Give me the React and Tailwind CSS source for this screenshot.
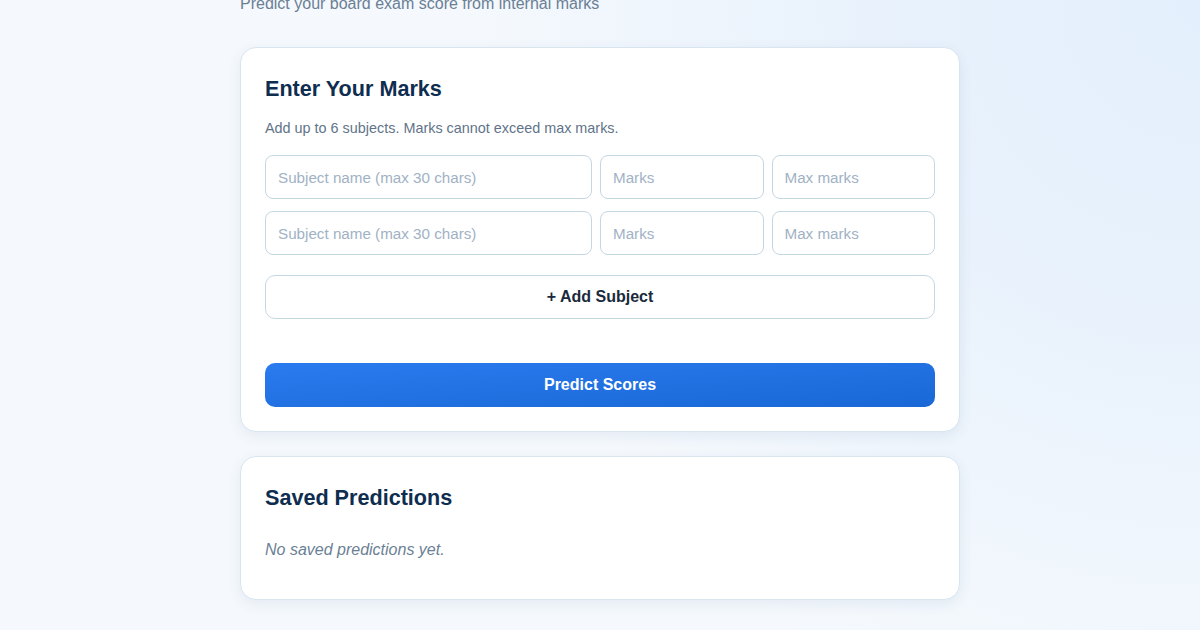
export default function App() {
  const rows = [0, 1];
  const inputCls =
    "h-11 w-full min-w-0 rounded-lg border border-[#c3d7e5] bg-white px-3 text-[15.2px] text-[#1b2a3b] outline-none placeholder:text-[#9fb2c5]";
  return (
    <div
      className="min-h-[630px] w-full overflow-hidden bg-[#f5f9fd]"
      style={{
        fontFamily: '"Liberation Sans", Arial, sans-serif',
        backgroundImage:
          "radial-gradient(circle at 100% 0%, #e3effc 0%, #e9f2fc 25%, rgba(245,249,253,0) 55%)",
      }}
    >
      <div className="mx-auto w-[720px]">
        <p className="-mt-[8px] mb-[31px] text-[16px] leading-6 text-[#6b7f95]">
          Predict your board exam score from internal marks
        </p>

        <div className="rounded-2xl border border-[#d8e5ef] bg-white px-6 pb-6 pt-[27px] shadow-[0_4px_14px_rgba(30,70,110,0.08)]">
          <h2 className="text-[21.6px] font-bold leading-7 text-[#0e2d4f]">Enter Your Marks</h2>
          <p className="mt-[15px] text-[14.4px] leading-5 text-[#5f7489]">
            Add up to 6 subjects. Marks cannot exceed max marks.
          </p>
          <div className="mt-[17px] flex flex-col gap-3">
            {rows.map((r) => (
              <div key={r} className="grid grid-cols-[2fr_1fr_1fr] gap-2">
                <input placeholder="Subject name (max 30 chars)" className={inputCls} />
                <input placeholder="Marks" className={inputCls} />
                <input placeholder="Max marks" className={inputCls} />
              </div>
            ))}
          </div>
          <button className="mt-5 flex h-11 w-full items-center justify-center rounded-[10px] border border-[#c3d7e5] bg-white text-[16px] font-bold text-[#1a2a3c]">
            + Add Subject
          </button>
          <button className="mt-11 flex h-11 w-full items-center justify-center rounded-[10px] bg-gradient-to-br from-[#2a7bef] to-[#1968d6] text-[16px] font-bold text-white">
            Predict Scores
          </button>
        </div>

        <div className="mt-6 rounded-2xl border border-[#d8e5ef] bg-white px-6 pb-[37px] pt-[27px] shadow-[0_4px_14px_rgba(30,70,110,0.08)]">
          <h2 className="text-[21.6px] font-bold leading-7 text-[#0e2d4f]">Saved Predictions</h2>
          <p className="mt-[26px] text-[16px] italic leading-6 text-[#6b7f95]">No saved predictions yet.</p>
        </div>
      </div>
    </div>
  );
}
